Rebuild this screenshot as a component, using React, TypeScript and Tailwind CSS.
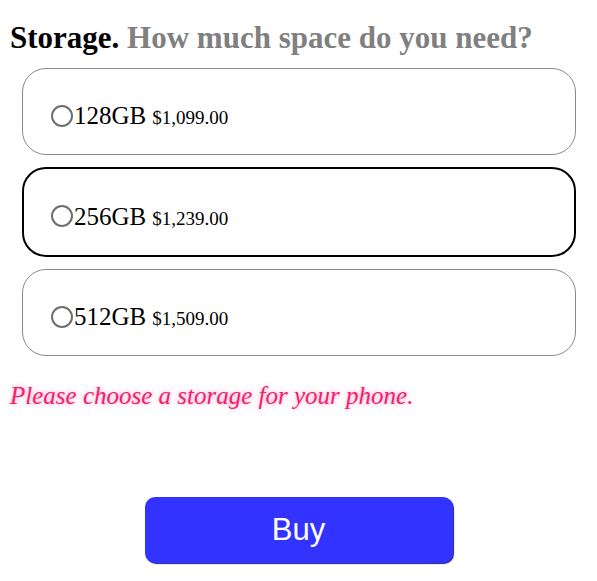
import React from "react";

const options = [
  { size: "128GB", price: "$1,099.00", active: false },
  { size: "256GB", price: "$1,239.00", active: true },
  { size: "512GB", price: "$1,509.00", active: false },
];

export default function App() {
  return (
    <div className="w-[597px] h-[581px] bg-white font-['Liberation_Serif',serif] text-black">
      <div className="pt-[20px] pl-[10px]">
        <h2 className="text-[31px] font-bold leading-[36px] m-0">
          Storage. <span className="text-[#808080]">How much space do you need?</span>
        </h2>
      </div>
      <div className="flex flex-col gap-[12px] pl-[22px] pr-[21px] mt-[12px]">
        {options.map((o) => (
          <div
            key={o.size}
            className={
              o.active
                ? "h-[90px] rounded-[24px] border-2 border-black flex items-center pl-[27px] pt-[8px]"
                : "h-[87px] rounded-[24px] border border-[#8a8a8a] flex items-center pl-[28px] pt-[8px]"
            }
          >
            <span className="w-[22px] h-[22px] rounded-full border-2 border-[#6f6f6f] bg-white shrink-0 mr-[1px]" />
            <span className="text-[25px] leading-none">{o.size}</span>
            <span className="text-[19px] leading-none ml-[6px] mt-[4px]">{o.price}</span>
          </div>
        ))}
      </div>
      <p className="mt-[25px] pl-[10px] italic text-[25px] leading-[30px] text-[#f0206f] [text-shadow:0_0_5px_rgba(255,90,150,0.6)]">
        Please choose a storage for your phone.
      </p>
      <div className="flex justify-center mt-[86px]">
        <button className="w-[308px] h-[66px] rounded-[10px] bg-[#3333ff] text-white text-[31px] font-['Liberation_Sans',sans-serif] shadow-[1px_1px_1px_#1f1f99]">
          Buy
        </button>
      </div>
    </div>
  );
}
